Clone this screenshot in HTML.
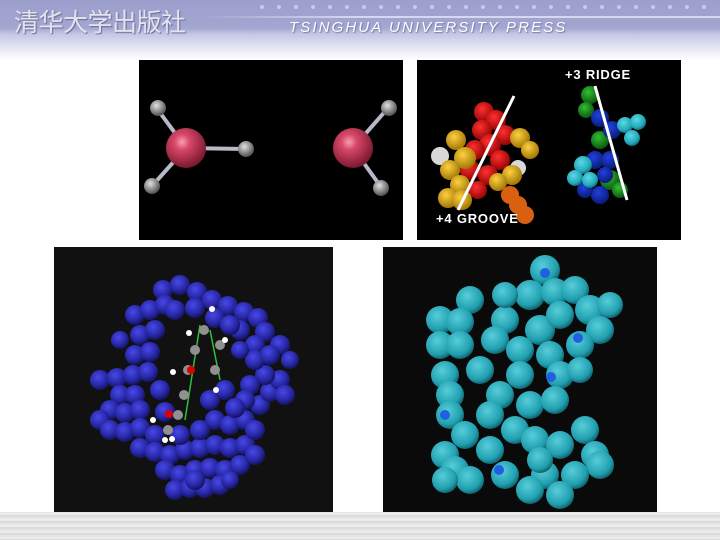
<!DOCTYPE html>
<html><head><meta charset="utf-8"><style>
html,body{margin:0;padding:0;width:720px;height:540px;overflow:hidden;background:#fff;position:relative;font-family:"Liberation Sans",sans-serif}
.hdr{position:absolute;left:0;top:0;width:720px;height:60px;background:linear-gradient(#9c9fcc 0px,#a3a6d1 28px,#c4c6e3 34px,#e6e7f4 48px,#fff 60px)}
.cn{position:absolute;left:14px;top:3px;font:25px "Noto Sans CJK SC",sans-serif;color:#e4e4ee;letter-spacing:-0.5px;text-shadow:1px 1px 1px #6a6c98}
.en{position:absolute;left:289px;top:19px;font:italic 15px "Liberation Sans",sans-serif;color:#fff;letter-spacing:2.1px;text-shadow:1px 1px 1px #7a7ca8}
.line{position:absolute;left:200px;top:16px;width:520px;height:2px;background:linear-gradient(90deg,rgba(255,255,255,0),rgba(220,222,240,.9) 30%)}
.foot{position:absolute;left:0;top:512px;width:720px;height:28px;background:repeating-linear-gradient(#e2e2e2 0,#f2f2f2 2px,#d6d6d6 4px,#ececec 6px);border-bottom:1px solid #888}
.p{position:absolute}
</style></head><body>
<div class="hdr"></div>
<div class="line"></div>
<svg class="p" style="left:0;top:0" width="720" height="20">
<g fill="#c8cae6">
<circle cx="262" cy="7" r="2"/><circle cx="279" cy="7" r="2"/><circle cx="296" cy="7" r="2"/><circle cx="313" cy="7" r="2"/><circle cx="330" cy="7" r="2"/><circle cx="347" cy="7" r="2"/><circle cx="364" cy="7" r="2"/><circle cx="381" cy="7" r="2"/><circle cx="398" cy="7" r="2"/><circle cx="415" cy="7" r="2"/><circle cx="432" cy="7" r="2"/><circle cx="449" cy="7" r="2"/><circle cx="466" cy="7" r="2"/><circle cx="483" cy="7" r="2"/><circle cx="500" cy="7" r="2"/><circle cx="517" cy="7" r="2"/><circle cx="534" cy="7" r="2"/><circle cx="551" cy="7" r="2"/><circle cx="568" cy="7" r="2"/><circle cx="585" cy="7" r="2"/><circle cx="602" cy="7" r="2"/><circle cx="619" cy="7" r="2"/><circle cx="636" cy="7" r="2"/><circle cx="653" cy="7" r="2"/><circle cx="670" cy="7" r="2"/><circle cx="687" cy="7" r="2"/><circle cx="704" cy="7" r="2"/>
</g></svg>
<div class="cn">清华大学出版社</div>
<div class="en">TSINGHUA UNIVERSITY PRESS</div>

<svg class="p" style="left:0;top:0" width="720" height="540">
<defs>
<radialGradient id="red" cx=".4" cy=".35" r=".65"><stop offset="0" stop-color="#f7a0b0"/><stop offset=".3" stop-color="#d84868"/><stop offset="1" stop-color="#7a1830"/></radialGradient>
<radialGradient id="gry" cx=".4" cy=".35" r=".65"><stop offset="0" stop-color="#e0e0e0"/><stop offset="1" stop-color="#505050"/></radialGradient>
<radialGradient id="blu" cx=".4" cy=".35" r=".7"><stop offset="0" stop-color="#4848e8"/><stop offset=".6" stop-color="#2828a8"/><stop offset="1" stop-color="#101050"/></radialGradient>
<radialGradient id="cy" cx=".4" cy=".35" r=".7"><stop offset="0" stop-color="#5cd8e6"/><stop offset=".7" stop-color="#22a8b8"/><stop offset="1" stop-color="#0e5a64"/></radialGradient>
<radialGradient id="yl" cx=".4" cy=".35" r=".7"><stop offset="0" stop-color="#ffd040"/><stop offset="1" stop-color="#9a7000"/></radialGradient>
<radialGradient id="rd" cx=".4" cy=".35" r=".7"><stop offset="0" stop-color="#ff3030"/><stop offset="1" stop-color="#900000"/></radialGradient>
<radialGradient id="gr" cx=".4" cy=".35" r=".7"><stop offset="0" stop-color="#30c030"/><stop offset="1" stop-color="#0a5010"/></radialGradient>
<radialGradient id="db" cx=".4" cy=".35" r=".7"><stop offset="0" stop-color="#2040e0"/><stop offset="1" stop-color="#081870"/></radialGradient>
</defs>
<rect x="139" y="60" width="264" height="180" fill="#000"/>
<g stroke="#b8b8c8" stroke-width="4">
<line x1="186" y1="148" x2="158" y2="110"/><line x1="186" y1="148" x2="245" y2="149"/><line x1="186" y1="148" x2="152" y2="186"/>
<line x1="353" y1="148" x2="388" y2="108"/><line x1="353" y1="148" x2="381" y2="187"/>
</g>
<circle cx="186" cy="148" r="20" fill="url(#red)"/>
<circle cx="353" cy="148" r="20" fill="url(#red)"/>
<circle cx="158" cy="108" r="8" fill="url(#gry)"/><circle cx="246" cy="149" r="8" fill="url(#gry)"/><circle cx="152" cy="186" r="8" fill="url(#gry)"/>
<circle cx="389" cy="108" r="8" fill="url(#gry)"/><circle cx="381" cy="188" r="8" fill="url(#gry)"/>
<rect x="417" y="60" width="264" height="180" fill="#000"/>
<g fill="url(#rd)"><circle cx="484" cy="112" r="10"/><circle cx="496" cy="120" r="10"/><circle cx="482" cy="130" r="10"/><circle cx="505" cy="135" r="10"/><circle cx="490" cy="145" r="11"/><circle cx="475" cy="150" r="10"/><circle cx="500" cy="160" r="10"/><circle cx="470" cy="170" r="10"/><circle cx="488" cy="175" r="10"/><circle cx="478" cy="190" r="9"/></g>
<circle cx="440" cy="156" r="9" fill="#d8d8d8"/><circle cx="518" cy="168" r="8" fill="#d8d8d8"/>
<g fill="url(#yl)"><circle cx="456" cy="140" r="10"/><circle cx="465" cy="158" r="11"/><circle cx="450" cy="170" r="10"/><circle cx="460" cy="185" r="10"/><circle cx="448" cy="198" r="10"/><circle cx="462" cy="200" r="10"/><circle cx="520" cy="138" r="10"/><circle cx="530" cy="150" r="9"/><circle cx="512" cy="175" r="10"/><circle cx="498" cy="182" r="9"/></g>
<g fill="#d86010"><circle cx="510" cy="195" r="9"/><circle cx="518" cy="205" r="9"/><circle cx="525" cy="215" r="9"/></g>
<g fill="url(#gr)"><circle cx="590" cy="95" r="9"/><circle cx="586" cy="110" r="8"/><circle cx="600" cy="140" r="9"/><circle cx="610" cy="180" r="10"/><circle cx="620" cy="190" r="8"/></g>
<g fill="url(#db)"><circle cx="600" cy="118" r="9"/><circle cx="612" cy="130" r="9"/><circle cx="595" cy="160" r="9"/><circle cx="610" cy="160" r="9"/><circle cx="600" cy="195" r="9"/><circle cx="585" cy="190" r="8"/><circle cx="605" cy="175" r="8"/></g>
<g fill="url(#cy)"><circle cx="625" cy="125" r="8"/><circle cx="638" cy="122" r="8"/><circle cx="632" cy="138" r="8"/><circle cx="583" cy="165" r="9"/><circle cx="575" cy="178" r="8"/><circle cx="590" cy="180" r="8"/></g>
<g stroke="#fff" stroke-width="3"><line x1="514" y1="96" x2="458" y2="210"/><line x1="595" y1="86" x2="627" y2="200"/></g>
<text x="565" y="79" font-family="Liberation Sans" font-weight="bold" font-size="13" fill="#fff" letter-spacing=".8">+3 RIDGE</text>
<text x="436" y="223" font-family="Liberation Sans" font-weight="bold" font-size="13" fill="#fff" letter-spacing=".8">+4 GROOVE</text>
<rect x="54" y="247" width="279" height="271" fill="#111"/>
<g fill="url(#blu)">
<circle cx="163" cy="290" r="10"/><circle cx="180" cy="285" r="10"/><circle cx="197" cy="292" r="10"/><circle cx="212" cy="300" r="10"/><circle cx="228" cy="306" r="10"/><circle cx="244" cy="312" r="10"/><circle cx="258" cy="318" r="10"/><circle cx="265" cy="332" r="10"/><circle cx="280" cy="345" r="10"/>
<circle cx="135" cy="315" r="10"/><circle cx="150" cy="310" r="10"/><circle cx="165" cy="305" r="10"/><circle cx="140" cy="335" r="10"/><circle cx="155" cy="330" r="10"/><circle cx="135" cy="355" r="10"/><circle cx="150" cy="352" r="10"/>
<circle cx="100" cy="380" r="10"/><circle cx="117" cy="378" r="10"/><circle cx="133" cy="375" r="10"/><circle cx="148" cy="372" r="10"/><circle cx="120" cy="395" r="10"/><circle cx="135" cy="395" r="10"/><circle cx="110" cy="410" r="10"/><circle cx="125" cy="413" r="10"/><circle cx="140" cy="410" r="10"/>
<circle cx="100" cy="420" r="10"/><circle cx="110" cy="430" r="10"/><circle cx="125" cy="432" r="10"/><circle cx="140" cy="428" r="10"/><circle cx="155" cy="435" r="10"/>
<circle cx="140" cy="448" r="10"/><circle cx="155" cy="452" r="10"/><circle cx="170" cy="455" r="10"/><circle cx="185" cy="450" r="10"/><circle cx="200" cy="448" r="10"/><circle cx="215" cy="445" r="10"/><circle cx="230" cy="448" r="10"/><circle cx="245" cy="445" r="10"/>
<circle cx="165" cy="470" r="10"/><circle cx="180" cy="475" r="10"/><circle cx="195" cy="470" r="10"/><circle cx="210" cy="468" r="10"/><circle cx="225" cy="470" r="10"/><circle cx="240" cy="465" r="10"/><circle cx="255" cy="455" r="10"/>
<circle cx="175" cy="490" r="10"/><circle cx="190" cy="488" r="10"/><circle cx="205" cy="488" r="10"/><circle cx="220" cy="485" r="10"/><circle cx="195" cy="480" r="10"/>
<circle cx="215" cy="420" r="10"/><circle cx="230" cy="425" r="10"/><circle cx="245" cy="420" r="10"/><circle cx="255" cy="430" r="10"/><circle cx="260" cy="405" r="10"/><circle cx="270" cy="392" r="10"/><circle cx="280" cy="380" r="10"/><circle cx="265" cy="375" r="10"/><circle cx="250" cy="385" r="10"/><circle cx="245" cy="400" r="10"/><circle cx="235" cy="408" r="10"/>
<circle cx="255" cy="345" r="10"/><circle cx="240" cy="330" r="10"/><circle cx="255" cy="360" r="10"/><circle cx="270" cy="355" r="10"/><circle cx="285" cy="395" r="10"/>
<circle cx="175" cy="310" r="10"/><circle cx="195" cy="308" r="10"/><circle cx="215" cy="318" r="10"/><circle cx="230" cy="325" r="10"/>
<circle cx="160" cy="390" r="10"/><circle cx="165" cy="412" r="10"/><circle cx="210" cy="400" r="10"/><circle cx="225" cy="390" r="10"/><circle cx="200" cy="430" r="10"/><circle cx="180" cy="435" r="10"/>
<circle cx="240" cy="350" r="9"/><circle cx="120" cy="340" r="9"/><circle cx="290" cy="360" r="9"/><circle cx="230" cy="480" r="9"/>
</g>
<g stroke="#30c040" stroke-width="1.5"><line x1="200" y1="325" x2="185" y2="420"/><line x1="210" y1="330" x2="220" y2="380"/></g>
<g fill="#909090"><circle cx="204" cy="330" r="5"/><circle cx="195" cy="350" r="5"/><circle cx="188" cy="370" r="5"/><circle cx="184" cy="395" r="5"/><circle cx="178" cy="415" r="5"/><circle cx="168" cy="430" r="5"/><circle cx="220" cy="345" r="5"/><circle cx="215" cy="370" r="5"/></g>
<g fill="#fff"><circle cx="212" cy="309" r="3"/><circle cx="189" cy="333" r="3"/><circle cx="225" cy="340" r="3"/><circle cx="173" cy="372" r="3"/><circle cx="216" cy="390" r="3"/><circle cx="153" cy="420" r="3"/><circle cx="165" cy="440" r="3"/><circle cx="172" cy="439" r="3"/></g>
<g fill="#d00"><circle cx="191" cy="370" r="4"/><circle cx="169" cy="414" r="4"/></g>
<rect x="383" y="247" width="274" height="266" fill="#0a0a0a"/>
<g fill="url(#cy)" opacity=".95">
<circle cx="545" cy="270" r="15"/><circle cx="530" cy="295" r="15"/><circle cx="555" cy="292" r="14"/><circle cx="575" cy="290" r="14"/><circle cx="590" cy="310" r="15"/><circle cx="600" cy="330" r="14"/><circle cx="580" cy="345" r="14"/>
<circle cx="470" cy="300" r="14"/><circle cx="440" cy="320" r="14"/><circle cx="460" cy="322" r="14"/><circle cx="440" cy="345" r="14"/><circle cx="460" cy="345" r="14"/><circle cx="505" cy="320" r="14"/><circle cx="495" cy="340" r="14"/>
<circle cx="540" cy="330" r="15"/><circle cx="560" cy="315" r="14"/><circle cx="520" cy="350" r="14"/><circle cx="550" cy="355" r="14"/><circle cx="560" cy="375" r="14"/><circle cx="580" cy="370" r="13"/>
<circle cx="445" cy="375" r="14"/><circle cx="450" cy="395" r="14"/><circle cx="480" cy="370" r="14"/><circle cx="500" cy="395" r="14"/><circle cx="520" cy="375" r="14"/>
<circle cx="450" cy="415" r="14"/><circle cx="465" cy="435" r="14"/><circle cx="490" cy="415" r="14"/><circle cx="515" cy="430" r="14"/><circle cx="530" cy="405" r="14"/><circle cx="555" cy="400" r="14"/>
<circle cx="445" cy="455" r="14"/><circle cx="455" cy="470" r="14"/><circle cx="470" cy="480" r="14"/><circle cx="490" cy="450" r="14"/><circle cx="505" cy="475" r="14"/><circle cx="535" cy="440" r="14"/><circle cx="560" cy="445" r="14"/>
<circle cx="585" cy="430" r="14"/><circle cx="595" cy="455" r="14"/><circle cx="600" cy="465" r="14"/><circle cx="575" cy="475" r="14"/><circle cx="545" cy="475" r="14"/><circle cx="560" cy="495" r="14"/><circle cx="530" cy="490" r="14"/><circle cx="610" cy="305" r="13"/>
<circle cx="445" cy="480" r="13"/><circle cx="460" cy="265" r="0"/><circle cx="505" cy="295" r="13"/><circle cx="540" cy="460" r="13"/>
</g>
<g fill="#2060e0"><circle cx="545" cy="273" r="5"/><circle cx="578" cy="338" r="5"/><circle cx="551" cy="377" r="5"/><circle cx="445" cy="415" r="5"/><circle cx="499" cy="470" r="5"/></g>
</svg>
<div class="foot"></div>
</body></html>
